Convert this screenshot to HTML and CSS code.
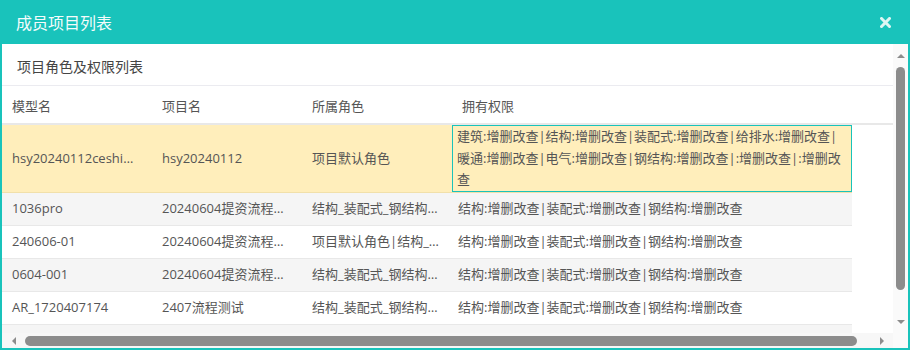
FILE: index.html
```html
<!DOCTYPE html>
<html lang="zh-CN">
<head>
  <meta charset="UTF-8">
  <title>成员项目列表</title>
  <link rel="stylesheet" href="styles.css">
</head>
<body>
  <div class="dialog">
    <div class="dialog-header">
      <span class="dialog-title">成员项目列表</span>
      <svg class="close" width="11" height="11" viewBox="0 0 11 11">
        <path d="M1.5 1.5 L9.5 9.5 M9.5 1.5 L1.5 9.5" stroke="#dcf6f3" stroke-width="3" stroke-linecap="square"/>
      </svg>
    </div>

    <div class="dialog-body">
      <div class="content">
        <div class="subtitle">项目角色及权限列表</div>

        <div class="table-head">
          <table>
            <colgroup><col class="c1"><col class="c2"><col class="c3"><col class="c4"></colgroup>
            <tr>
              <th>模型名</th>
              <th>项目名</th>
              <th>所属角色</th>
              <th>拥有权限</th>
            </tr>
          </table>
        </div>

        <table class="rows">
          <colgroup><col class="c1"><col class="c2"><col class="c3"><col class="c4"></colgroup>
          <tr class="selected">
            <td>hsy20240112ceshimodel</td>
            <td>hsy20240112</td>
            <td>项目默认角色</td>
            <td class="perm wrap">建筑:增删改查|结构:增删改查|装配式:增删改查|给排水:增删改查|暖通:增删改查|电气:增删改查|钢结构:增删改查|:增删改查|:增删改查</td>
          </tr>
          <tr>
            <td>1036pro</td>
            <td>20240604提资流程测试</td>
            <td>结构_装配式_钢结构_给排水</td>
            <td class="perm">结构:增删改查|装配式:增删改查|钢结构:增删改查</td>
          </tr>
          <tr>
            <td>240606-01</td>
            <td>20240604提资流程测试</td>
            <td>项目默认角色|结构_装配式</td>
            <td class="perm">结构:增删改查|装配式:增删改查|钢结构:增删改查</td>
          </tr>
          <tr>
            <td>0604-001</td>
            <td>20240604提资流程测试</td>
            <td>结构_装配式_钢结构_给排水</td>
            <td class="perm">结构:增删改查|装配式:增删改查|钢结构:增删改查</td>
          </tr>
          <tr>
            <td>AR_1720407174</td>
            <td>2407流程测试</td>
            <td>结构_装配式_钢结构_给排水</td>
            <td class="perm">结构:增删改查|装配式:增删改查|钢结构:增删改查</td>
          </tr>
          <tr>
            <td>0603-002</td>
            <td>20240603流程测试</td>
            <td>结构_装配式</td>
            <td class="perm">结构:增删改查|装配式:增删改查</td>
          </tr>
        </table>
      </div>

      <div class="vscroll">
        <div class="arrow"><span class="tri up"></span></div>
        <div class="vthumb"></div>
        <div class="spacer"></div>
        <div class="arrow"><span class="tri down"></span></div>
      </div>

      <div class="hscroll">
        <div class="harrow"><span class="tri left"></span></div>
        <div class="hthumb"></div>
        <div class="spacer"></div>
        <div class="harrow"><span class="tri right"></span></div>
      </div>

      <div class="corner"></div>
    </div>
  </div>
</body>
</html>
```

FILE: styles.css
```css
body {
  margin: 0;
  font-family: "Open Sans", "Noto Sans CJK SC", sans-serif;
  background: #fff;
}
.dialog {
  width: 910px;
  height: 350px;
  box-sizing: border-box;
  border: 2px solid #19c3bb;
  border-top: none;
  display: flex;
  flex-direction: column;
}
.dialog-header {
  height: 44px;
  margin: 0 -2px;
  background: #19c3bb;
  display: flex;
  align-items: center;
  justify-content: space-between;
  padding: 0 19px 0 16px;
  flex-shrink: 0;
}
.dialog-title {
  color: #f4fcfb;
  font-size: 16px;
}
.dialog-body {
  flex: 1;
  display: grid;
  grid-template-columns: 891px 15px;
  grid-template-rows: 289px 15px;
  background: #fff;
}
.content {
  overflow: hidden;
  color: #555;
  font-size: 13px;
}
.subtitle {
  height: 42px;
  box-sizing: border-box;
  padding: 13px 0 0 15px;
  font-size: 14px;
  line-height: 20px;
  color: #444;
  border-bottom: 1px solid #ebebf0;
}
table {
  border-collapse: collapse;
  table-layout: fixed;
  width: 850px;
}
col.c1, col.c2, col.c3 { width: 150px; }
col.c4 { width: 400px; }
.table-head {
  border-bottom: 2px solid #e8e8e8;
}
th {
  text-align: left;
  font-weight: normal;
  height: 37px;
  box-sizing: border-box;
  padding: 12px 10px 8px;
  line-height: 17px;
  color: #555;
}
.rows tr {
  background: #fff;
  border-bottom: 1px solid #e8e8e8;
}
.rows tr:nth-child(even) {
  background: #f5f5f5;
}
.rows tr.selected {
  background: #ffeebb;
  border-bottom-color: #f1e0aa;
}
td {
  height: 33px;
  box-sizing: border-box;
  padding: 0 10px;
  line-height: 17px;
  white-space: nowrap;
  overflow: hidden;
  text-overflow: ellipsis;
}
td.perm {
  padding: 0 6px;
}
td.wrap {
  white-space: normal;
  word-break: break-all;
  line-height: 21.5px;
  padding: 1px 5px 1px 5px;
  box-shadow: inset 0 0 0 1px #19c3bb;
}
.vscroll {
  background: #fafafa;
  display: flex;
  flex-direction: column;
  align-items: center;
}
.arrow {
  height: 23px;
  width: 100%;
  display: flex;
  align-items: center;
  justify-content: center;
}
.vthumb {
  width: 9px;
  height: 223px;
  border-radius: 5px;
  background: #8c8c8c;
}
.spacer {
  flex: 1;
}
.hscroll {
  background: #f7f7f7;
  display: flex;
  align-items: center;
}
.harrow {
  width: 23px;
  height: 100%;
  display: flex;
  align-items: center;
  justify-content: center;
}
.hthumb {
  width: 832px;
  height: 10px;
  border-radius: 5px;
  background: #8c8c8c;
}
.corner {
  background: #fafafa;
}
.tri {
  width: 0;
  height: 0;
  border: 4px solid transparent;
}
.tri.up { border-bottom-color: #8c8c8c; border-top-width: 0; }
.tri.down { border-top-color: #8c8c8c; border-bottom-width: 0; }
.tri.left { border-right-color: #8c8c8c; border-left-width: 0; }
.tri.right { border-left-color: #8c8c8c; border-right-width: 0; }
```
